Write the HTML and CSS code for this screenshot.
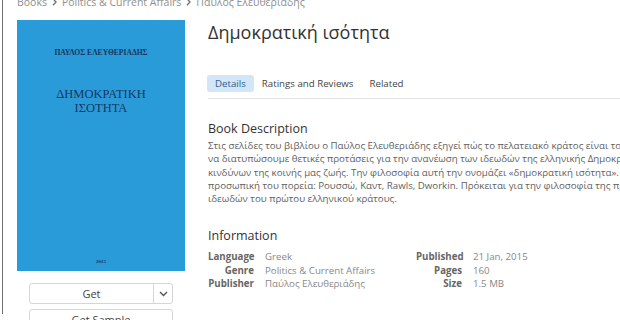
FILE: index.html
```html
<!DOCTYPE html>
<html lang="el">

<head>
    <meta charset="UTF-8">
    <title>Δημοκρατική ισότητα</title>
    <link rel="stylesheet" href="styles.css">
</head>

<body>
    <div class="page">
        <div class="crumbs">
            <span>Books</span>
            <svg class="sep" width="5" height="8" viewBox="0 0 5 8"><path d="M1 0.8 L4 4 L1 7.2" fill="none" stroke="#777" stroke-width="1.4"/></svg>
            <span>Politics &amp; Current Affairs</span>
            <svg class="sep" width="5" height="8" viewBox="0 0 5 8"><path d="M1 0.8 L4 4 L1 7.2" fill="none" stroke="#777" stroke-width="1.4"/></svg>
            <span>Παύλος Ελευθεριάδης</span>
        </div>

        <div class="main">
            <div class="side">
                <div class="cover">
                    <div class="cover-author">ΠΑΥΛΟΣ ΕΛΕΥΘΕΡΙΑΔΗΣ</div>
                    <div class="cover-title">ΔΗΜΟΚΡΑΤΙΚΗ<br>ΙΣΟΤΗΤΑ</div>
                    <div class="cover-year">2015</div>
                </div>

                <div class="btn split">
                    <span class="btn-label">Get</span>
                    <span class="btn-drop">
                        <svg width="9" height="6" viewBox="0 0 9 6"><path d="M1 1 L4.5 4.5 L8 1" fill="none" stroke="#555" stroke-width="1.4"/></svg>
                    </span>
                </div>
                <div class="btn">
                    <span class="btn-label">Get Sample</span>
                </div>
            </div>

            <div class="content">
                <h1 class="title">Δημοκρατική ισότητα</h1>

                <div class="tabs">
                    <span class="tab active">Details</span>
                    <span class="tab">Ratings and Reviews</span>
                    <span class="tab">Related</span>
                </div>

                <h2 class="section">Book Description</h2>
                <p class="desc">
                    Στις σελίδες του βιβλίου ο Παύλος Ελευθεριάδης εξηγεί πώς το πελατειακό κράτος είναι το αποτέλεσμα μιας ιδεολογίας<br>
                    να διατυπώσουμε θετικές προτάσεις για την ανανέωση των ιδεωδών της ελληνικής Δημοκρατίας και την αντιμετώπιση<br>
                    κινδύνων της κοινής μας ζωής. Την φιλοσοφία αυτή την ονομάζει «δημοκρατική ισότητα». Το βιβλίο ακολουθεί<br>
                    προσωπική του πορεία: Ρουσσώ, Καντ, Rawls, Dworkin. Πρόκειται για την φιλοσοφία της πραγματικής ελευθερίας<br>
                    ιδεωδών του πρώτου ελληνικού κράτους.
                </p>

                <h2 class="section info-head">Information</h2>
                <div class="info">
                    <div class="info-col">
                        <span class="label">Language</span><span class="value">Greek</span>
                        <span class="label">Genre</span><span class="value">Politics &amp; Current Affairs</span>
                        <span class="label">Publisher</span><span class="value">Παύλος Ελευθεριάδης</span>
                    </div>
                    <div class="info-col">
                        <span class="label">Published</span><span class="value">21 Jan, 2015</span>
                        <span class="label">Pages</span><span class="value">160</span>
                        <span class="label">Size</span><span class="value">1.5 MB</span>
                    </div>
                </div>
            </div>
        </div>
    </div>
</body>

</html>
```

FILE: styles.css
```css
html, body {
    margin: 0;
    height: 100%;
    overflow: hidden;
    background: white;
}

body {
    font-family: "Open Sans", "Noto Sans", sans-serif;
    color: #333;
}

.page {
    margin-left: 2px;
    height: 100%;
    border-left: 1px solid #6e6e6e;
    padding-left: 14px;
}

.crumbs {
    margin-top: -6px;
    height: 26px;
    display: flex;
    align-items: flex-start;
    gap: 5px;
    font-size: 10.5px;
    line-height: 16px;
    color: #8f8f8f;
    white-space: nowrap;
}

.crumbs .sep {
    margin-top: 4px;
    flex: none;
}

.main {
    display: flex;
    gap: 23px;
}

.side {
    width: 168px;
    flex: none;
}

.cover {
    height: 251px;
    background: #2a9bd9;
    font-family: "Liberation Serif", "DejaVu Serif", serif;
    color: #16365f;
    text-align: center;
    display: flex;
    flex-direction: column;
    align-items: center;
}

.cover-author {
    margin-top: 28px;
    font-size: 7.6px;
    font-weight: bold;
}

.cover-title {
    margin-top: 30px;
    font-size: 12.5px;
    line-height: 14px;
}

.cover-year {
    margin-top: auto;
    margin-bottom: 7px;
    font-size: 5px;
    font-weight: bold;
}

.btn {
    margin: 12px 12px 0;
    height: 19px;
    border: 1px solid #d6d6d6;
    border-radius: 3px;
    display: flex;
    align-items: center;
    font-size: 11px;
    color: #444;
    background: #fff;
}

.btn + .btn {
    margin-top: 5px;
}

.btn-label {
    flex: 1;
    text-align: center;
}

.btn-drop {
    width: 18px;
    align-self: stretch;
    border-left: 1px solid #d6d6d6;
    display: flex;
    align-items: center;
    justify-content: center;
}

.content {
    flex: 1;
    min-width: 0;
    white-space: nowrap;
}

.title {
    margin: 0;
    font-size: 18px;
    font-weight: normal;
    line-height: 24px;
    color: #333;
}

.tabs {
    margin-top: 31px;
    padding-bottom: 6px;
    border-bottom: 1px solid #e2e2e2;
    display: flex;
    font-size: 9.7px;
    color: #444;
}

.tab {
    padding: 0 8px;
    line-height: 17px;
    border-radius: 3px;
}

.tab:first-child {
    margin-left: -1px;
}

.tab.active {
    background: #d3e6f7;
    color: #2d5f8f;
}

.section {
    margin: 21px 0 0;
    font-size: 12.5px;
    font-weight: normal;
    line-height: 17px;
    color: #333;
}

.desc {
    margin: 2px 0 0;
    font-size: 9.7px;
    line-height: 13.25px;
    color: #606060;
}

.info-head {
    margin-top: 22px;
}

.info {
    display: flex;
    margin-top: 6px;
}

.info-col {
    display: grid;
    column-gap: 11px;
    align-content: start;
    font-size: 9.7px;
    line-height: 13.5px;
}

.info-col:first-child {
    grid-template-columns: 46px 151px;
}

.info-col:last-child {
    grid-template-columns: 46px auto;
}

.label {
    font-weight: bold;
    color: #666;
    text-align: right;
}

.value {
    color: #888;
}
```
